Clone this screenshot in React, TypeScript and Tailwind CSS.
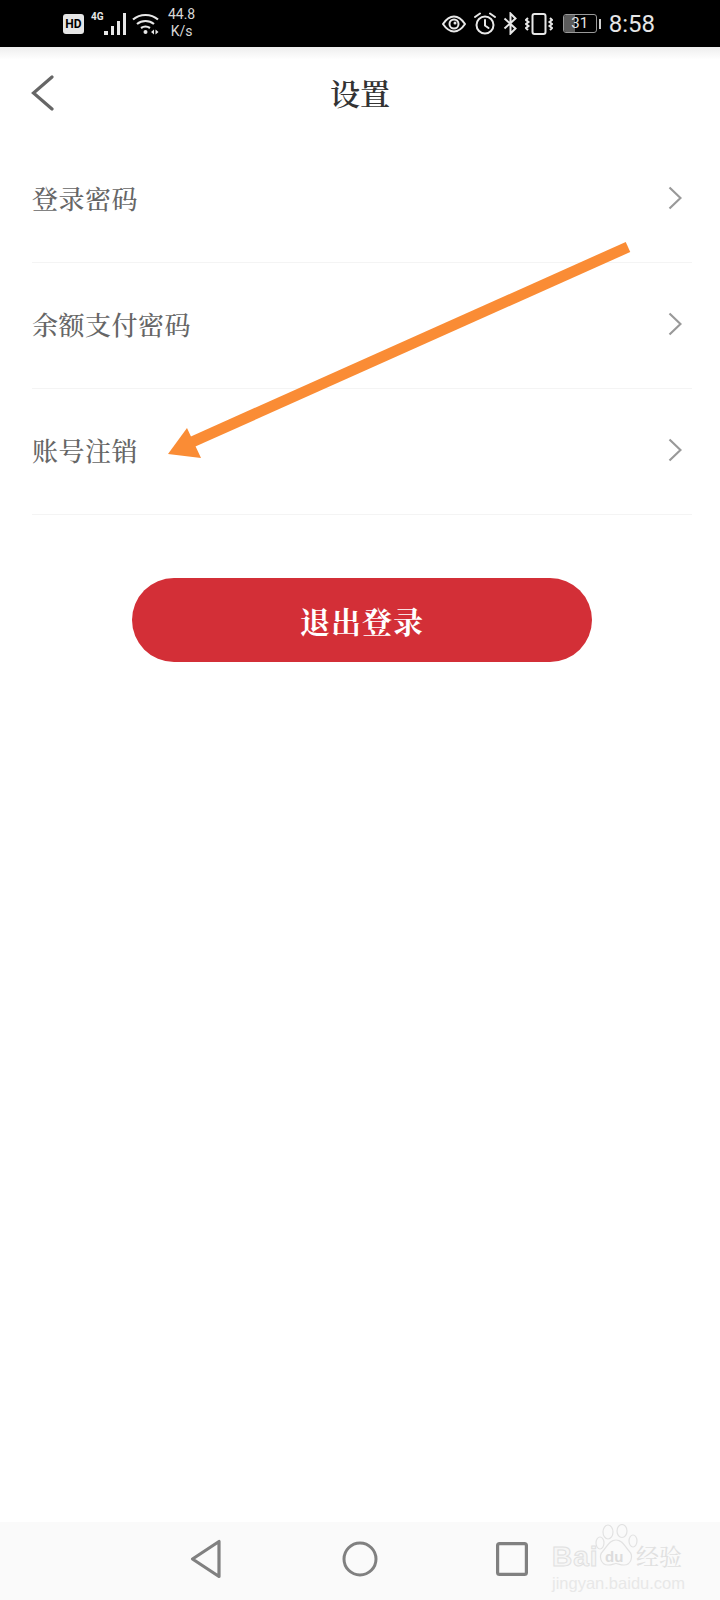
import React from 'react';

const FONT = '[font-family:"Noto_Serif_CJK_SC","Noto_Sans_CJK_SC",serif]';

const rows = ['登录密码', '余额支付密码', '账号注销'];

const StatusIcons = () => (
    <div className="flex items-center h-full text-[#e8e8e8]">
        <svg width="24" height="18" viewBox="0 0 24 18" className="mr-[8px]" fill="none" stroke="currentColor">
            <path d="M1 9C5 3 8.500 1.500 12 1.500S19 3 23 9c-4 6-7.500 7.500-11 7.500S5 15 1 9z" strokeWidth="2" />
            <circle cx="12" cy="9" r="4.500" strokeWidth="2" />
            <circle cx="13" cy="8" r="1.500" fill="currentColor" stroke="none" />
        </svg>
        <svg width="22" height="23" viewBox="0 0 22 23" className="mr-[7px]" fill="none" stroke="currentColor" strokeWidth="2">
            <circle cx="11" cy="13" r="8.500" />
            <path d="M11 8v5.500l3.500 2.500M1 5l5-3.500M21 5l-5-3.500" strokeLinecap="round" />
        </svg>
        <svg width="15" height="23" viewBox="0 0 15 23" className="mr-[7px]" fill="none" stroke="currentColor" strokeWidth="2">
            <path d="M1.500 6.500l11 10L7.500 21.500V1.500l5 5-11 10" />
        </svg>
        <svg width="28" height="22" viewBox="0 0 28 22" className="mr-[10px]" fill="none" stroke="currentColor" strokeWidth="2">
            <rect x="7.500" y="1" width="13" height="20" rx="2" />
            <path d="M3 5l-2 2 2.500 2-2.500 2 2.500 2-2.500 2 2 2M25 5l2 2-2.500 2 2.500 2-2.500 2 2.500 2-2 2" strokeWidth="2" />
        </svg>
        <div className="flex items-center mr-[8px]">
            <div className="relative w-[34px] h-[19px] border border-[#9a9a9a] rounded-[3px] flex items-center justify-center overflow-hidden">
                <div className="absolute left-0 top-0 bottom-0 w-[11px] bg-[#5c5c5c]" />
                <span className="relative text-[15px] leading-none text-[#e4e4e4] font-['Roboto',sans-serif]">31</span>
            </div>
            <div className="w-[2px] h-[10px] bg-[#cfcfcf] ml-[2px]" />
        </div>
        <span className="text-[24px] leading-none text-[#e6e6e6] font-['Roboto',sans-serif]">8:58</span>
    </div>
);

const Chevron = () => (
    <svg width="14" height="24" viewBox="0 0 14 24" fill="none" stroke="#999999" strokeWidth="2.200" className="mr-[10px] mb-[4px]">
        <path d="M1.500 1.500L12.500 12 1.500 22.500" />
    </svg>
);

const App = () => {
    return (
        <div className={`relative w-[720px] h-[1600px] bg-white flex flex-col overflow-hidden ${FONT}`}>
            {/* Status bar */}
            <div className="h-[47px] bg-black flex items-center justify-between pl-[63px] pr-[65px] shrink-0">
                <div className="flex items-center h-full text-[#e8e8e8]">
                    <div className="w-[21px] h-[20px] bg-[#e6e6e6] rounded-[3px] flex items-center justify-center text-[12px] leading-none font-bold text-black font-['Roboto',sans-serif]">HD</div>
                    <span className="ml-[7px] mb-[14px] text-[10px] leading-none font-bold font-['Roboto',sans-serif]">4G</span>
                    <div className="flex items-end gap-[3px] h-[22px]">
                        <div className="w-[4px] h-[4px] bg-[#e8e8e8]" />
                        <div className="w-[3px] h-[9px] bg-[#e8e8e8]" />
                        <div className="w-[3px] h-[14px] bg-[#e8e8e8]" />
                        <div className="w-[3px] h-[22px] bg-[#e8e8e8]" />
                    </div>
                    <svg width="28" height="22" viewBox="0 0 28 22" className="ml-[6px]" fill="none" stroke="currentColor" strokeWidth="2.200">
                        <path d="M1 6.500C8 0.500 19 0.500 26 6.500M5 11c5-4 12-4 17 0M9 15c3-2 6-2 9 0" />
                        <circle cx="13.500" cy="19" r="2" fill="currentColor" stroke="none" />
                        <path d="M19 19l3-2.500v5zM23.500 16.500l3 2.500-3 2.500z" fill="currentColor" stroke="none" />
                    </svg>
                    <div className="ml-[7px] w-[30px] -mt-[2px] flex flex-col items-center text-[14px] leading-[17px] text-[#d8d8d8] font-['Roboto',sans-serif]">
                        <span>44.8</span>
                        <span>K/s</span>
                    </div>
                </div>
                <StatusIcons />
            </div>

            {/* Header */}
            <div className="h-[90px] shrink-0 bg-gradient-to-b from-[#eeeeee] via-white via-[14%] to-white flex items-center justify-center relative">
                <svg width="24" height="36" viewBox="0 0 24 36" fill="none" stroke="#666666" strokeWidth="3.200" strokeLinecap="round" className="absolute left-[31px] top-[28px]">
                    <path d="M21 2L2.500 18 21 34" />
                </svg>
                <span className="text-[30px] leading-none font-semibold text-[#333333]">设置</span>
            </div>

            {/* Settings list */}
            <div className="flex flex-col ml-[32px] mr-[28px] shrink-0">
                {rows.map((label) => (
                    <div key={label} className="h-[126px] border-b-[1.500px] border-[#f4f4f4] flex items-center justify-between">
                        <span className="text-[26px] leading-none text-[#666666] font-medium tracking-[0.5px] mb-[4px]">{label}</span>
                        <Chevron />
                    </div>
                ))}
            </div>

            {/* Logout */}
            <div className="mt-[63px] ml-[4px] flex justify-center shrink-0">
                <button className="w-[460px] h-[84px] rounded-full bg-[#d32f37] text-white text-[30px] leading-none font-bold tracking-[1px]">
                    退出登录
                </button>
            </div>

            <div className="flex-1" />

            {/* Navigation bar */}
            <div className="h-[78px] shrink-0 bg-[#fafafa] flex items-center pl-[190px] pb-[4px]">
                <svg width="32" height="40" viewBox="0 0 32 40" fill="none" stroke="#808080" strokeWidth="3.200" strokeLinejoin="round">
                    <path d="M2.500 20L29 2.500v35z" />
                </svg>
                <svg width="36" height="36" viewBox="0 0 36 36" fill="none" stroke="#808080" strokeWidth="3" className="ml-[120px]">
                    <circle cx="18" cy="18" r="16" />
                </svg>
                <svg width="32" height="34" viewBox="0 0 32 34" fill="none" stroke="#808080" strokeWidth="3.200" className="ml-[118px]">
                    <rect x="1.600" y="1.600" width="28.800" height="30.800" rx="2" />
                </svg>
            </div>

            {/* Baidu watermark */}
            <div className="absolute left-[552px] top-[1524px] w-[130px] h-[68px]">
                <svg width="44" height="48" viewBox="0 0 44 48" className="absolute left-[43px] top-0" fill="none" stroke="#e2e2e2" strokeWidth="1.200">
                    <ellipse cx="13" cy="8" rx="5" ry="7" />
                    <ellipse cx="27" cy="7" rx="5" ry="6.500" />
                    <ellipse cx="5" cy="19" rx="4" ry="6" />
                    <ellipse cx="38" cy="17" rx="4" ry="6" />
                    <path d="M21 16c7 0 9 7 13 11 5 5 2 14-5 14-4 0-6-1.500-8-1.500S17 41 13 41C6 41 3 32 8 27c4-4 6-11 13-11z" fill="#fafafa" />
                </svg>
                <span className="absolute left-0 top-[19px] text-[28px] leading-none font-bold tracking-[1px] text-[#f6f6f6] [-webkit-text-stroke:1px_#e0e0e0] font-['Liberation_Sans',sans-serif]">Bai</span>
                <span className="absolute left-[53px] top-[25px] text-[15px] leading-none font-bold text-[#dcdcdc] font-['Liberation_Sans',sans-serif]">du</span>
                <span className="absolute left-[84px] top-[20px] text-[23px] leading-none text-[#e0e0e0]">经验</span>
                <span className="absolute left-0 top-[51px] text-[16.500px] leading-none text-[#e8e8e8] font-['Liberation_Sans',sans-serif]">jingyan.baidu.com</span>
            </div>

            {/* Annotation arrow */}
            <svg width="720" height="1600" viewBox="0 0 720 1600" className="absolute left-0 top-0 pointer-events-none" fill="#fa8c35">
                <path d="M628 247L192 442" stroke="#fa8c35" strokeWidth="11" />
                <path d="M168 454L187 428L201 458z" />
            </svg>
        </div>
    );
};

export default App;
